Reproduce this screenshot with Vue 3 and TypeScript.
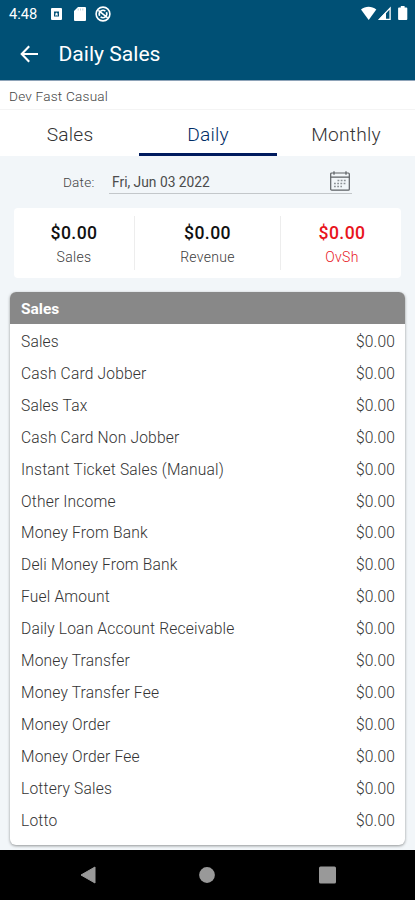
<script setup lang="ts">
import { ref } from 'vue'

interface Total {
  label: string
  value: string
  alert?: boolean
}

const tabs: string[] = ['Sales', 'Daily', 'Monthly']
const activeTab = ref('Daily')

const totals: Total[] = [
  { label: 'Sales', value: '$0.00' },
  { label: 'Revenue', value: '$0.00' },
  { label: 'OvSh', value: '$0.00', alert: true },
]

const rows: string[] = [
  'Sales',
  'Cash Card Jobber',
  'Sales Tax',
  'Cash Card Non Jobber',
  'Instant Ticket Sales (Manual)',
  'Other Income',
  'Money From Bank',
  'Deli Money From Bank',
  'Fuel Amount',
  'Daily Loan Account Receivable',
  'Money Transfer',
  'Money Transfer Fee',
  'Money Order',
  'Money Order Fee',
  'Lottery Sales',
  'Lotto',
]
</script>

<template>
  <div class="screen">
    <header class="top">
      <div class="status">
        <span class="clock">4:48</span>
        <svg class="s-app" width="11" height="12" viewBox="0 0 11 12">
          <rect width="11" height="12" rx="1" fill="#fff" />
          <path d="M3 3.5h5v5H3z" fill="#005075" />
          <path d="M5.5 4.3l.6 1.2 1.3.2-.9.9.2 1.3-1.2-.6-1.2.6.2-1.3-.9-.9 1.3-.2z" fill="#fff" />
        </svg>
        <svg class="s-sd" width="12" height="14" viewBox="0 0 12 14">
          <path d="M4 0h7a1 1 0 0 1 1 1v12a1 1 0 0 1-1 1H1a1 1 0 0 1-1-1V4z" fill="#fff" />
          <path d="M4.2 1.5v2M6.5 1.5v2M8.8 1.5v2" stroke="#bcd0da" stroke-width="1" />
        </svg>
        <svg class="s-sync" width="16" height="16" viewBox="0 0 16 16" fill="none" stroke="#fff">
          <circle cx="8" cy="8" r="6.9" stroke-width="1.6" />
          <path d="M4.6 9.8a3.8 3.8 0 0 1 5.8-4.6M11.4 6.2a3.8 3.8 0 0 1-5.8 4.6M3.3 4.4l9.4 7.4" stroke-width="1.6" />
        </svg>
        <span class="fill"></span>
        <svg width="49" height="16" viewBox="0 0 49 16">
          <path d="M2 3.6C6.4-.1 12.7-.1 17.3 3.6L9.7 14z" fill="#fff" />
          <path d="M20.6 13.3L31.1 2.1v11.2z" fill="none" stroke="#fff" stroke-width="1.3" />
          <path d="M19.2 14L27 5.7V14z" fill="#fff" />
          <path d="M41.8 0h3.8v1.6h1.8a.9.9 0 0 1 .9.9v10.6a.9.9 0 0 1-.9.9H40a.9.9 0 0 1-.9-.9V2.5a.9.9 0 0 1 .9-.9h1.8z" fill="#fff" />
        </svg>
      </div>
      <div class="appbar">
        <svg width="18" height="18" viewBox="0 0 18 18" fill="none" stroke="#fff" stroke-width="2.1">
          <path d="M9.2 1.2L1.7 9l7.5 7.8M2 9h16" />
        </svg>
        <h1>Daily Sales</h1>
      </div>
    </header>

    <div class="store">Dev Fast Casual</div>

    <nav class="tabs">
      <button
        v-for="tab in tabs"
        :key="tab"
        :class="['tab', { active: tab === activeTab }]"
        @click="activeTab = tab"
      >{{ tab }}</button>
    </nav>

    <main class="content">
      <div class="date-row">
        <span class="date-label">Date:</span>
        <div class="date-field">
          <span>Fri, Jun 03 2022</span>
          <svg width="20" height="20" viewBox="0 0 20 20" fill="none" stroke="#5c6064">
            <rect x=".7" y="2" width="18.6" height="17.2" rx="1" stroke-width="1.2" />
            <path d="M.7 6.2h18.6M4 .2v3.6M16 .2v3.6" stroke-width="1.2" />
            <path d="M7.5 9.5h9M4 12.5h12.5M4 15.5h8" stroke="#8d9296" stroke-width="1.3" stroke-dasharray="1.8 1.4" />
          </svg>
        </div>
      </div>

      <section class="totals">
        <div v-for="t in totals" :key="t.label" :class="['total', { alert: t.alert }]">
          <strong>{{ t.value }}</strong>
          <span>{{ t.label }}</span>
        </div>
      </section>

      <section class="card">
        <h2>Sales</h2>
        <ul>
          <li v-for="row in rows" :key="row">
            <span>{{ row }}</span>
            <span class="amount">$0.00</span>
          </li>
        </ul>
      </section>
    </main>

    <footer class="navbar">
      <svg width="16" height="18" viewBox="0 0 16 18"><path d="M15 1v16L1 9z" fill="#999" stroke="#999" stroke-linejoin="round" /></svg>
      <svg width="16" height="18" viewBox="0 0 16 18"><circle cx="8" cy="9" r="7.9" fill="#999" /></svg>
      <svg width="17" height="18" viewBox="0 0 17 18"><rect y=".5" width="17" height="17" rx="1.5" fill="#999" /></svg>
    </footer>
  </div>
</template>

<style>
body {
  margin: 0;
}
</style>

<style scoped>
.screen {
  width: 415px;
  height: 900px;
  overflow: hidden;
  display: flex;
  flex-direction: column;
  background: #f2f6f9;
  font-family: Roboto, "Liberation Sans", sans-serif;
  color: #3c3c3c;
}
.top {
  height: 80px;
  flex: none;
  background: #005075;
  border-bottom: 1px solid #8ea3b8;
  color: #fff;
}
.status {
  height: 27px;
  display: flex;
  align-items: center;
  padding: 0 4px 0 9px;
}
.clock {
  width: 42px;
  font-size: 14.7px;
}
.s-sd {
  margin-left: 12px;
}
.s-sync {
  margin-left: 9px;
}
.fill {
  flex: 1;
}
.status svg:last-child {
  margin-right: 3px;
}
.appbar {
  height: 53px;
  display: flex;
  align-items: center;
  gap: 20.5px;
  padding-left: 20px;
}
h1 {
  margin: 0;
  font-size: 21.1px;
  font-weight: 400;
  line-height: 56px;
}
.store {
  height: 28px;
  flex: none;
  padding-left: 9px;
  background: #fff;
  border-bottom: 1px solid #f4f4f4;
  font-size: 13.6px;
  font-weight: 300;
  line-height: 31px;
  letter-spacing: 0.22px;
  color: #444;
}
.tabs {
  height: 46px;
  flex: none;
  display: grid;
  grid-template-columns: repeat(3, 1fr);
  padding-left: 1px;
  background: #fff;
}
.tab {
  padding: 5px 0 0;
  border: 0;
  border-bottom: 3px solid transparent;
  background: none;
  font: 300 19.2px Roboto, "Liberation Sans", sans-serif;
  letter-spacing: 0.2px;
  color: #333;
}
.tab.active {
  color: #002c66;
  border-bottom-color: #001b5e;
}
.content {
  flex: 1;
  padding: 0 10px;
}
.date-row {
  height: 38px;
  display: flex;
  padding-left: 53px;
}
.date-label {
  width: 46px;
  font-size: 13.6px;
  font-weight: 300;
  line-height: 53px;
  letter-spacing: 0.2px;
  color: #444;
}
.date-field {
  width: 238px;
  display: flex;
  justify-content: space-between;
  border-bottom: 1px solid #c3c7ca;
  padding: 0 2px 0 3px;
  font-size: 13.8px;
  line-height: 53px;
  color: #4c4c4c;
}
.date-field svg {
  margin-top: 15px;
}
.totals {
  height: 54px;
  margin: 14px 4px 0;
  padding: 8px 0;
  display: grid;
  grid-template-columns: 121px 146px 1fr;
  background: #fff;
  border-radius: 4px;
}
.total {
  display: flex;
  flex-direction: column;
  align-items: center;
  border-right: 1px solid #ededed;
  font-size: 14px;
  font-weight: 300;
  line-height: 20px;
  letter-spacing: 0.3px;
  color: #3c3c3c;
}
.total:last-child {
  border-right: 0;
  padding-left: 2px;
}
.total strong {
  margin: 6px 0 3px;
  font-size: 17.6px;
  line-height: 22px;
  font-weight: 500;
  letter-spacing: 0.4px;
  color: #111;
}
.total.alert,
.total.alert strong {
  color: #e8141c;
}
.card {
  height: 553px;
  margin-top: 14px;
  background: #fff;
  border-radius: 6px;
  box-shadow: 0 1px 3px rgba(0, 0, 0, 0.4);
  overflow: hidden;
}
h2 {
  margin: 0;
  height: 32px;
  padding-left: 11px;
  background: #888;
  color: #fff;
  font-size: 15.5px;
  font-weight: 700;
  line-height: 34px;
}
ul {
  margin: 0;
  padding: 1.9px 10px 0 11px;
  list-style: none;
}
li {
  height: 31.93px;
  display: flex;
  justify-content: space-between;
  font-size: 15.6px;
  font-weight: 300;
  line-height: 32px;
  letter-spacing: 0.17px;
  color: #333;
}
.amount {
  letter-spacing: 0.15px;
}
.navbar {
  height: 50px;
  flex: none;
  display: flex;
  align-items: center;
  justify-content: center;
  gap: 103.5px;
  background: #000;
}
</style>
